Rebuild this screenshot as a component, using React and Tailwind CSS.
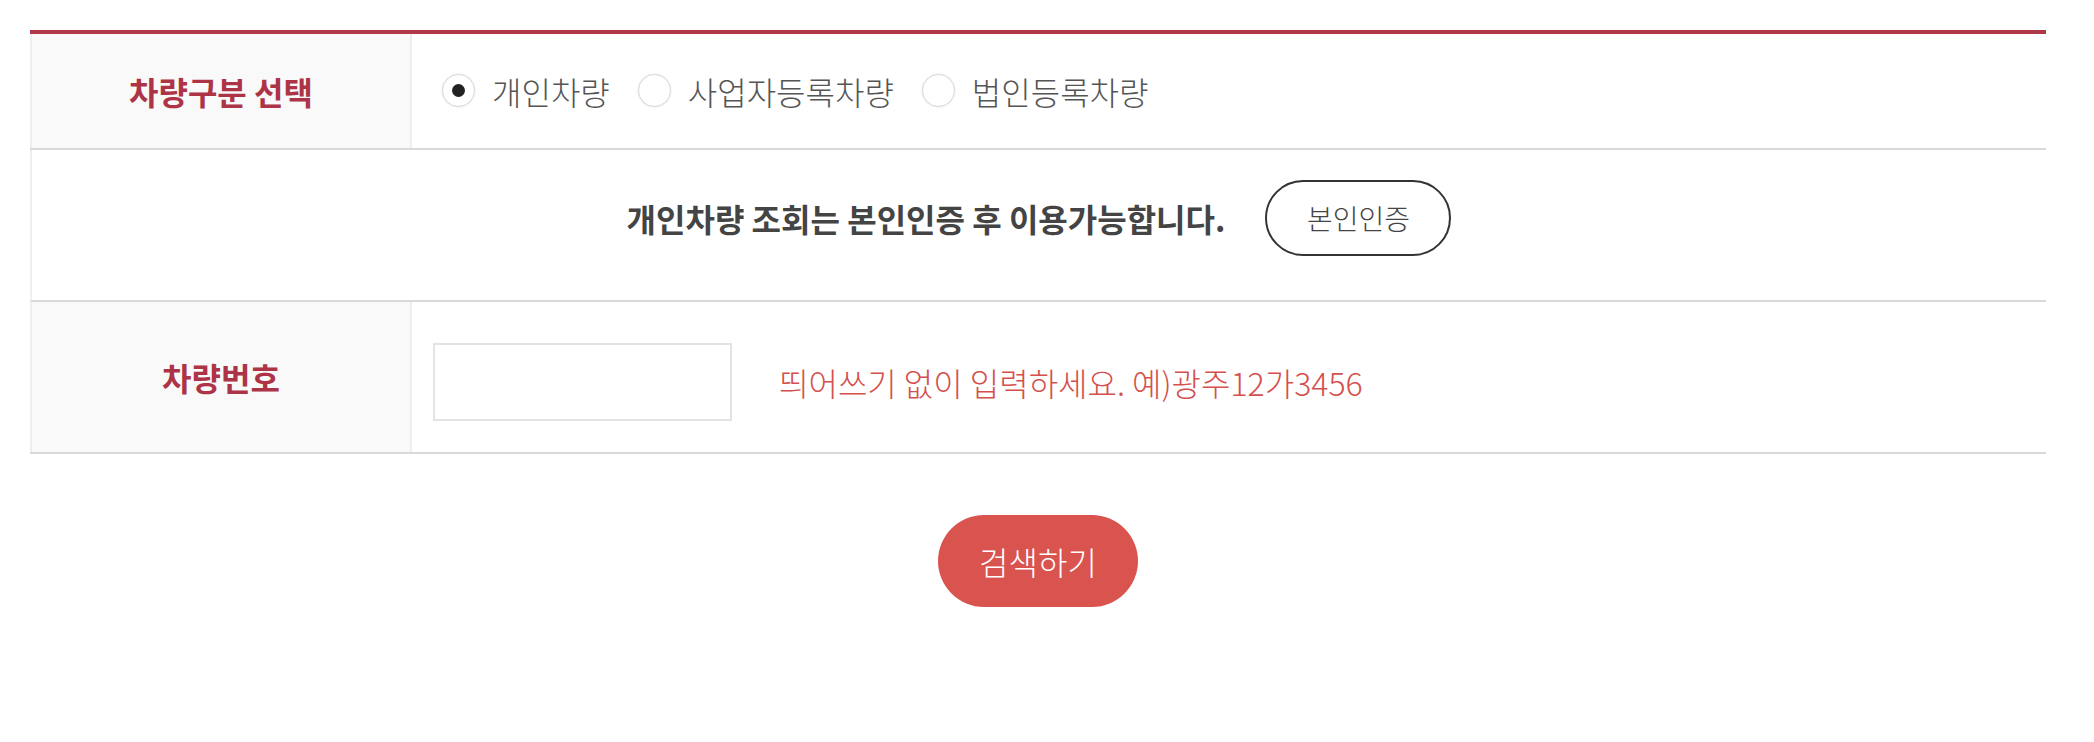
import { useState } from "react";

const font = { fontFamily: '"Noto Sans CJK KR", "Noto Sans", sans-serif' };

const Radio = ({ checked, label, onClick }) => (
  <label className="flex items-center cursor-pointer" onClick={onClick}>
    <span className="flex items-center justify-center w-[33px] h-[33px] rounded-full border border-[#dadada] bg-white shadow-[0_0_2px_rgba(0,0,0,0.12)]">
      {checked && <span className="block w-[13px] h-[13px] rounded-full bg-[#222]" />}
    </span>
    <span className="ml-[17px] text-[32px] font-light leading-[1.4] text-[#555]">{label}</span>
  </label>
);

const App = () => {
  const [type, setType] = useState(0);
  const types = ["개인차량", "사업자등록차량", "법인등록차량"];

  return (
    <div className="min-h-screen bg-white pt-[30px] pl-[30px] pr-[48px]" style={font}>
      <div className="border-t-4 border-[#b03a48]">
        {/* 차량구분 */}
        <div className="flex h-[116px] border-b-2 border-[#d9d9d9]">
          <div className="w-[382px] shrink-0 flex items-center justify-center bg-[#f9f9f9] border-l-2 border-r-2 border-[#eeeeee]">
            <span className="text-[32px] font-bold leading-[1.4] text-[#ad3446]">차량구분 선택</span>
          </div>
          <div className="flex items-center gap-[28px] pl-[30px]">
            {types.map((t, i) => (
              <Radio key={t} label={t} checked={type === i} onClick={() => setType(i)} />
            ))}
          </div>
        </div>

        {/* 본인인증 안내 */}
        <div className="flex justify-center items-start h-[152px] pt-[30px] border-b-2 border-l-2 border-[#d9d9d9] border-l-[#eeeeee]">
          <div className="flex items-center gap-[40px]">
            <span className="text-[32px] font-bold leading-[1.4] text-[#444]">개인차량 조회는 본인인증 후 이용가능합니다.</span>
            <button className="w-[186px] h-[76px] rounded-full border-2 border-[#333] bg-white text-[28px] font-light leading-none text-[#444]">
              본인인증
            </button>
          </div>
        </div>

        {/* 차량번호 */}
        <div className="flex h-[152px] border-b-2 border-[#d9d9d9]">
          <div className="w-[382px] shrink-0 flex items-center justify-center bg-[#f9f9f9] border-l-2 border-r-2 border-[#eeeeee]">
            <span className="text-[32px] font-bold leading-[1.4] text-[#ad3446]">차량번호</span>
          </div>
          <div className="flex items-start pt-[41px] pl-[21px]">
            <div className="flex items-center gap-[47px]">
              <input type="text" className="w-[299px] h-[78px] border-2 border-[#e3e3e3] bg-white px-3 text-[26px] outline-none" />
              <span className="text-[32px] font-light leading-[1.4] text-[#d4504c]">띄어쓰기 없이 입력하세요. 예)광주12가3456</span>
            </div>
          </div>
        </div>
      </div>

      <div className="flex justify-center pt-[61px]">
        <button className="w-[200px] h-[92px] rounded-full bg-[#d9534f] text-white text-[32px] font-light leading-none">
          검색하기
        </button>
      </div>
    </div>
  );
};

export default App;
